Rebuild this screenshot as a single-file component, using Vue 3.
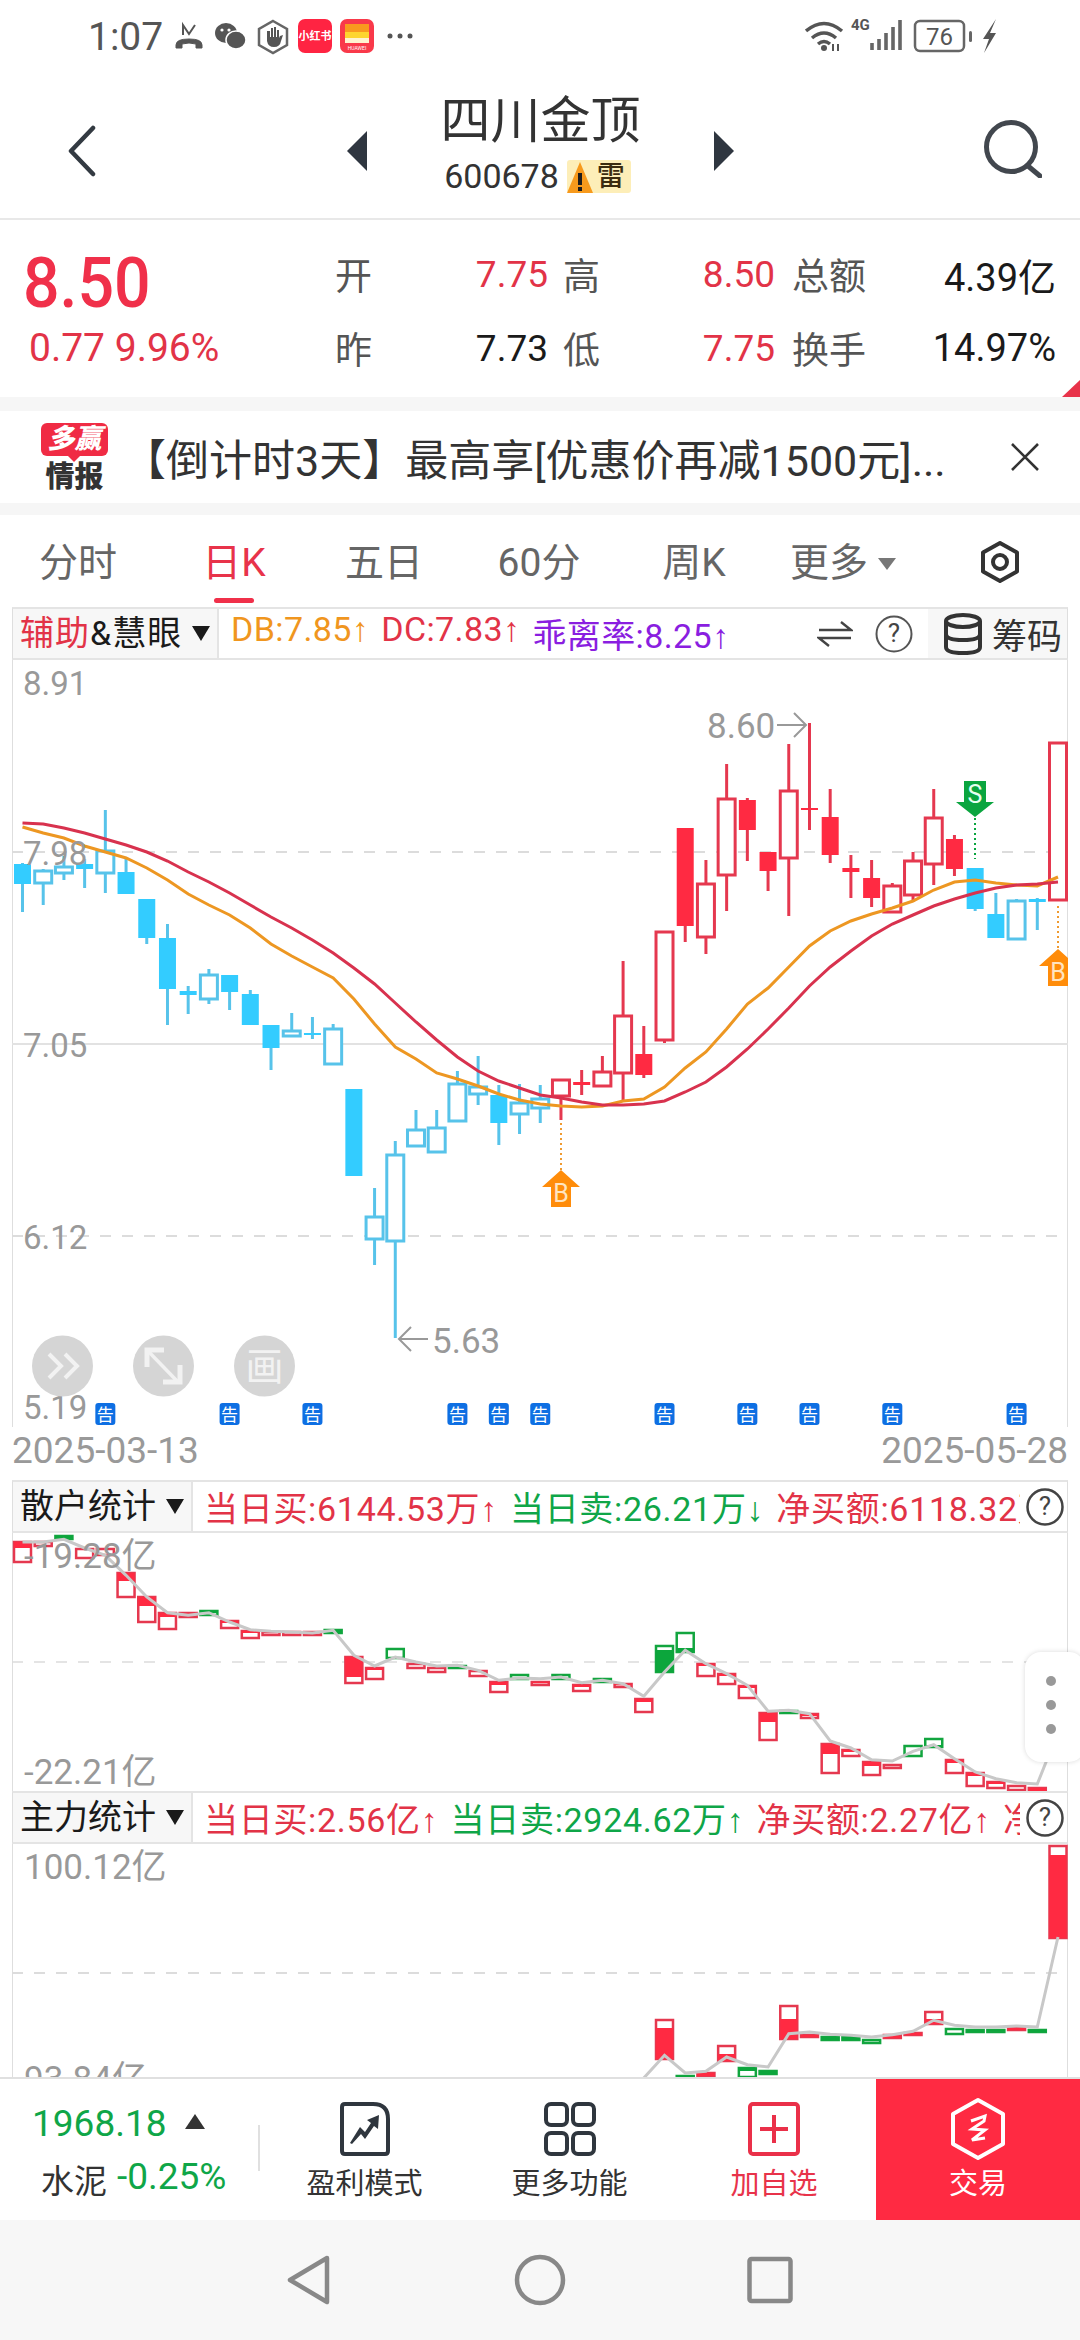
<script setup>
const cx = i => 22.5 + 20.71 * i
const raw = [
[862,911,863,883,'c'],[868,904,870,882,'C'],[855,879,866,872,'C'],[858,887,863,868,'c'],[809,892,850,872,'C'],[857,893,871,893,'c'],
[898,943,898,937,'c'],[923,1024,937,988,'c'],[985,1013,990,994,'c'],[968,1003,974,998,'C'],[974,1009,974,991,'c'],[989,1024,993,1024,'c'],
[1024,1069,1024,1047,'c'],[1012,1035,1030,1035,'C'],[1016,1038,1032,1034,'c'],[1023,1063,1028,1063,'C'],[1088,1175,1088,1175,'c'],[1187,1264,1216,1238,'C'],
[1140,1337,1154,1240,'C'],[1109,1145,1129,1145,'C'],[1109,1152,1127,1151,'C'],[1070,1120,1083,1120,'C'],[1055,1104,1086,1093,'C'],[1084,1144,1094,1122,'c'],
[1083,1133,1102,1113,'C'],[1084,1122,1098,1107,'C'],[1078,1119,1079,1095,'R'],[1069,1094,1081,1084,'r'],[1055,1085,1071,1085,'R'],[960,1101,1015,1072,'R'],
[1025,1077,1053,1074,'r'],[930,1042,931,1039,'R'],[827,941,827,925,'r'],[859,953,883,936,'R'],[763,910,798,874,'R'],[797,860,799,829,'r'],
[851,890,851,870,'r'],[743,915,790,857,'R'],[722,829,807,809,'r'],[788,862,816,854,'r'],[854,897,867,871,'r'],[859,906,877,897,'r'],
[882,912,885,911,'R'],[851,901,860,894,'R'],[788,884,817,863,'R'],[834,875,838,868,'r'],[867,910,867,908,'c'],[892,937,913,937,'c'],
[898,939,900,938,'C'],[897,929,898,901,'c'],[742,899,742,899,'R']
]
const colors = { c: '#33ccff', C: '#57c3ea', r: '#ff2a42', R: '#e5384f' }
const candles = raw.map((d, i) => ({
  id: i, x: cx(i), wt: d[0], wb: d[1], bt: d[2], bb: d[3],
  hollow: d[4] === 'C' || d[4] === 'R', color: colors[d[4]],
  wick: (d[4] === 'c' || d[4] === 'C') ? '#57c3ea' : '#e5384f'
}))
const dcY = [822,823,827,832,838,844,851,860,871,881,892,904,916,927,939,952,967,983,1002,1021,1039,1056,1070,1080,1087,1094,1097,1101,1104,1104,1103,1100,1091,1081,1066,1048,1028,1007,985,966,950,935,923,914,905,898,892,887,884,883,881]
const dbY = [826,832,837,845,851,857,867,879,893,904,914,927,943,955,966,977,998,1023,1046,1058,1072,1078,1085,1093,1099,1103,1105,1106,1105,1100,1098,1086,1067,1051,1028,1003,987,966,945,930,920,913,907,900,889,881,879,882,884,885,876]
const toPts = ys => ys.map((y, i) => `${cx(i).toFixed(1)},${y}`).join(' ')
const dcPts = toPts(dcY)
const dbPts = toPts(dbY)
const notices = [4,10,14,21,23,25,31,35,38,42,48].map(i => cx(i))

const barColor = { r: '#e5384f', g: '#12a53f' }
const barFill = { r: '#ff2a42', g: '#0ca63c' }
const mk = list => list.map(d => ({
  key: d[0], x: cx(d[0]) - 8.5, y: d[1], h: Math.max(d[2] - d[1], 2),
  stroke: barColor[d[3]], fill: barFill[d[3]], ft: d[4], fh: d[5] ? d[5] - d[4] : 0
}))
const retail = mk([
[0,1540,1560,'r',1540,1546],[1,1540,1544,'r'],[2,1534,1537,'g',1534,1536],[3,1547,1556,'r'],[4,1547,1553,'r'],
[5,1571,1595,'r',1571,1579],[6,1595,1620,'r',1595,1604],[7,1611,1627,'r',1611,1615],[8,1611,1615,'r',1611,1613],[9,1609,1613,'g',1609,1611],
[10,1619,1626,'r',1619,1621],[11,1629,1636,'r',1629,1631],[12,1630,1633,'r'],[13,1630,1633,'r'],[14,1630,1633,'r'],[15,1628,1631,'g',1628,1631],
[16,1655,1681,'r',1655,1675],[17,1666,1677,'r',1666,1668],[18,1647,1656,'g'],[19,1662,1666,'r'],[20,1666,1670,'r'],[21,1664,1666,'g',1664,1666],
[22,1669,1674,'r'],[23,1680,1690,'r',1680,1683],[24,1673,1677,'g'],[25,1680,1683,'r',1680,1681],[26,1673,1677,'g'],[27,1683,1689,'r',1683,1685],
[28,1677,1680,'g'],[29,1682,1685,'r',1682,1683],[30,1697,1710,'r',1697,1700],[31,1644,1670,'g',1648,1670],[32,1631,1650,'g',1646,1650],
[33,1662,1674,'r',1662,1664],[34,1672,1682,'r',1672,1674],[35,1684,1696,'r',1684,1686],[36,1711,1738,'r',1711,1720],[37,1709,1711,'g',1709,1711],
[38,1712,1716,'r',1712,1714],[39,1742,1771,'r',1742,1752],[40,1748,1754,'r',1748,1750],[41,1760,1773,'r',1760,1764],[42,1763,1766,'r'],
[43,1744,1754,'g'],[44,1737,1745,'g',1743,1745],[45,1758,1771,'r',1758,1761],[46,1771,1784,'r',1771,1774],[47,1780,1786,'r',1780,1782],
[48,1784,1788,'r'],[49,1786,1789,'r',1786,1789]
])
const retailZ6 = [240,240,232,258,280,340,405,452,460,452,480,503,508,510,513,505,580,612,585,600,612,610,625,655,648,650,645,662,655,665,703,630,565,605,635,670,748,745,755,837,858,893,897,868,848,890,930,950,962,966]
const retailLine = retailZ6.map((v, i) => `${cx(i).toFixed(1)},${(1460 + v / 3).toFixed(1)}`).join(' ') + ' 1058,1730'

const main = mk([
[31,2018,2057,'r',2026,2057],[32,2074,2076,'g',2074,2076],[33,2071,2074,'r',2071,2074],[34,2044,2059,'r',2052,2059],[35,2066,2075,'g',2066,2069],
[36,2069,2072,'g',2069,2072],[37,2004,2037,'r',2017,2037],[38,2033,2035,'r',2033,2035],[39,2035,2038,'g',2035,2038],[40,2035,2038,'g',2035,2038],
[41,2038,2041,'g',2038,2039],[42,2033,2036,'r',2034,2036],[43,2031,2033,'r',2031,2033],[44,2010,2022,'r',2017,2022],[45,2027,2032,'g',2027,2028],
[46,2028,2030,'g',2028,2030],[47,2028,2029,'g',2028,2029],[48,2026,2028,'r',2026,2028],[49,2028,2030,'g',2028,2030],[50,1844,1936,'r',1853,1936]
])
const mainZ = [[30,888],[31,820],[32,873],[33,868],[34,825],[35,848],[36,855],[37,755],[38,750],[39,757],[40,760],[41,765],[42,758],[43,748],[44,715],[45,730],[46,735],[47,735],[48,732],[49,735],[50,465]]
const mainLine = mainZ.map(p => `${cx(p[0]).toFixed(1)},${(1780 + p[1] / 3).toFixed(1)}`).join(' ')

const quotes = [
  ['开', '7.75', 'red', '高', '8.50', 'red', '总额', '4.39亿'],
  ['昨', '7.73', 'black', '低', '7.75', 'red', '换手', '14.97%']
]
const tabs = [
  { t: '分时' }, { t: '日K', on: true }, { t: '五日' }, { t: '60分' }, { t: '周K' }
]
</script>

<template>
  <div class="page">
    <div class="status">
      <span class="time">1:07</span>
      <svg class="st-left" width="240" height="40" viewBox="174 22 240 40">
        <path d="M176 53v-3q0-6 13-6t13 6v3h-6v-4q-7-2-14 0v4z" fill="#555" stroke="#555" stroke-width="1"/>
        <path d="M183 40v-10l6 9 6-9" fill="none" stroke="#555" stroke-width="2"/>
        <ellipse cx="226" cy="38" rx="11" ry="10" fill="#555"/>
        <ellipse cx="236" cy="45" rx="10" ry="9" fill="#555" stroke="#fff" stroke-width="1.5"/>
        <circle cx="222" cy="35" r="1.6" fill="#fff"/><circle cx="229" cy="35" r="1.6" fill="#fff"/>
        <polygon points="273,26 287,34 287,50 273,58 259,50 259,34" fill="none" stroke="#666" stroke-width="2.5"/>
        <path d="M267 36v10q1 6 7 6t7-6l2-6-3 1-1 2v-8h-2v7h-1v-10h-2v10h-1v-9h-2v9h-1v-6z" fill="#555"/>
        <rect x="298" y="24" width="34" height="34" rx="7" fill="#ff2442"/>
        <text x="315" y="45" text-anchor="middle" class="tiny">小红书</text>
        <rect x="340" y="24" width="34" height="34" rx="7" fill="#f9394a"/>
        <rect x="345" y="29" width="24" height="8" fill="#f99a1e"/><rect x="345" y="37" width="24" height="6" fill="#fed52e"/><rect x="345" y="43" width="24" height="5" fill="#fff3d0"/>
        <text x="357" y="55" text-anchor="middle" class="tinier">HUAWEI</text>
        <circle cx="390" cy="41" r="2.5" fill="#555"/><circle cx="400" cy="41" r="2.5" fill="#555"/><circle cx="410" cy="41" r="2.5" fill="#555"/>
      </svg>
      <svg class="st-right" width="195" height="40" viewBox="805 22 195 40">
        <path d="M806 36q18-15 36 0M812 43q12-10 24 0M818 49q6-5 12 0" fill="none" stroke="#555" stroke-width="3.5"/>
        <circle cx="824" cy="53" r="3" fill="#555"/>
        <path d="M833 49v7M838 49v7" stroke="#555" stroke-width="2"/>
        <text x="851" y="35" class="fourg">4G</text>
        <path d="M872 48v7M879 44v11M886 38v17M893 32v23M900 25v30" stroke="#666" stroke-width="3.6"/>
        <rect x="915" y="26" width="49" height="30" rx="5" fill="none" stroke="#666" stroke-width="2.5"/>
        <text x="939.5" y="50" text-anchor="middle" class="batt">76</text>
        <rect x="969" y="36" width="3" height="11" rx="1.5" fill="#666"/>
        <polygon points="996,24 983,44 989,44 984,58 996,38 990,38" fill="#555"/>
      </svg>
    </div>

    <div class="head">
      <svg class="back" width="29" height="52" viewBox="0 0 29 52"><path d="M26 3 4 26l22 23" fill="none" stroke="#333a42" stroke-width="4.5" stroke-linecap="round" stroke-linejoin="round"/></svg>
      <svg width="20" height="40" viewBox="0 0 20 40"><polygon points="20,0 0,20 20,40" fill="#2f3640"/></svg>
      <div class="title-col">
        <div class="title">四川金顶</div>
        <div class="sub">
          <span>600678</span>
          <span class="thunder">
            <svg width="26" height="31" viewBox="0 0 26 31"><polygon points="13,0 26,31 0,31" fill="#f79a1c"/><rect x="11" y="11" width="4" height="12" fill="#1c1c1c"/><rect x="11" y="25" width="4" height="4" fill="#1c1c1c"/></svg>
            <b>雷</b>
          </span>
        </div>
      </div>
      <svg width="20" height="40" viewBox="0 0 20 40"><polygon points="0,0 20,20 0,40" fill="#2f3640"/></svg>
      <svg class="search" width="58" height="58" viewBox="0 0 58 58"><circle cx="27" cy="27" r="24.5" fill="none" stroke="#42474e" stroke-width="5"/><path d="M44 46l12 10" stroke="#42474e" stroke-width="5" stroke-linecap="round"/></svg>
    </div>

    <div class="quote">
      <div class="price">
        <div class="big">8.50</div>
        <div class="chg">0.77 9.96%</div>
      </div>
      <div class="stats">
        <template v-for="q in quotes" :key="q[0]">
          <span class="lb">{{ q[0] }}</span>
          <span class="val" :class="q[2]">{{ q[1] }}</span>
          <span class="lb end">{{ q[3] }}</span>
          <span class="val" :class="q[5]">{{ q[4] }}</span>
          <span class="lb end">{{ q[6] }}</span>
          <span class="val black last">{{ q[7] }}</span>
        </template>
      </div>
      <i class="corner"></i>
    </div>

    <div class="band"></div>

    <div class="ad">
      <div class="logo">
        <div class="bubble">多赢</div>
        <div class="intel">情报</div>
      </div>
      <div class="ad-text">【倒计时3天】最高享[优惠价再减1500元]...</div>
      <svg class="close" width="30" height="30" viewBox="0 0 30 30"><path d="M2 2l26 26M28 2 2 28" stroke="#333" stroke-width="2.6"/></svg>
    </div>

    <div class="band b2"></div>

    <div class="tabs">
      <div v-for="t in tabs" :key="t.t" class="tab" :class="{ on: t.on }">{{ t.t }}</div>
      <div class="tab more">更多<i class="caret"></i></div>
      <div class="tab gear">
        <svg width="38" height="42" viewBox="0 0 38 42"><polygon points="19,2 36,11.5 36,30.5 19,40 2,30.5 2,11.5" fill="none" stroke="#333" stroke-width="4" stroke-linejoin="round"/><circle cx="19" cy="21" r="7" fill="none" stroke="#333" stroke-width="4"/></svg>
      </div>
    </div>

    <div class="charts">
      <div class="phead">
        <div class="plabel wide"><span class="red">辅助</span>&amp;慧眼<i class="tri"></i></div>
        <div class="inds first">
          <span class="orange">DB:7.85↑</span><span class="dred">DC:7.83↑</span><span class="purple">乖离率:8.25↑</span>
        </div>
        <svg width="36" height="36" viewBox="0 0 36 36" class="swap"><path d="M2 14H34L24 6M34 22H2L12 30" fill="none" stroke="#444" stroke-width="2.4"/></svg>
        <svg width="38" height="38" viewBox="0 0 38 38" class="help h1"><circle cx="19" cy="19" r="17.5" fill="none" stroke="#555" stroke-width="2"/><text x="19" y="27" text-anchor="middle" class="q">?</text></svg>
        <div class="chip">
          <svg width="40" height="42" viewBox="0 0 40 42"><ellipse cx="20" cy="8" rx="17" ry="6" fill="none" stroke="#333" stroke-width="4"/><path d="M3 8v26q0 6 17 6t17-6V8M3 21q0 6 17 6t17-6" fill="none" stroke="#333" stroke-width="4"/></svg>
          <span>筹码</span>
        </div>
      </div>

      <svg class="plot" width="1056" height="767" viewBox="12 659 1056 767">
        <line x1="12" x2="1068" y1="851" y2="851" class="dash"/>
        <line x1="12" x2="1068" y1="1043" y2="1043" class="solid"/>
        <line x1="12" x2="1068" y1="1235" y2="1235" class="dash"/>
        <g v-for="c in candles" :key="c.id">
          <line :x1="c.x" :x2="c.x" :y1="c.wt" :y2="c.wb" :stroke="c.wick" stroke-width="3"/>
          <rect v-if="c.hollow" :x="c.x - 8.5" :y="c.bt" width="17" :height="c.bb - c.bt" fill="#fff" :stroke="c.color" stroke-width="3"/>
          <rect v-else :x="c.x - 8.5" :y="c.bt" width="17" :height="c.bb - c.bt" :fill="c.color"/>
        </g>
        <polyline :points="dbPts" fill="none" stroke="#ed9722" stroke-width="3"/>
        <polyline :points="dcPts" fill="none" stroke="#d8324e" stroke-width="3"/>
        <text x="23" y="694" class="axis">8.91</text>
        <text x="23" y="864" class="axis">7.98</text>
        <text x="23" y="1056" class="axis">7.05</text>
        <text x="23" y="1248" class="axis">6.12</text>
        <text x="23" y="1418" class="axis">5.19</text>
        <text x="707" y="737" class="axis big-b">8.60</text>
        <path d="M777 724h29m-12-12 12 12-12 12" fill="none" stroke="#999" stroke-width="2"/>
        <path d="M428 1338h-29m12-12-12 12 12 12" fill="none" stroke="#999" stroke-width="2"/>
        <text x="432" y="1352" class="axis big-b">5.63</text>

        <line x1="561" x2="561" y1="1122" y2="1169" class="dot-o"/>
        <polygon points="561,1169 580,1186 571,1186 571,1206 551,1206 551,1186 542,1186" fill="#ff8c0a"/>
        <text x="561" y="1201" text-anchor="middle" class="mark">B</text>
        <line x1="1058" x2="1058" y1="905" y2="948" class="dot-o"/>
        <polygon points="1058,948 1077,965 1068,965 1068,985 1048,985 1048,965 1039,965" fill="#ff8c0a"/>
        <text x="1058" y="980" text-anchor="middle" class="mark">B</text>
        <line x1="975" x2="975" y1="817" y2="858" class="dot-g"/>
        <polygon points="964,780 986,780 986,801 994,801 975,816 956,801 964,801" fill="#0aa53f"/>
        <text x="975" y="802" text-anchor="middle" class="mark white">S</text>

        <g v-for="n in notices" :key="n">
          <rect :x="n - 10" y="1402" width="20" height="22" rx="3" fill="#0e6fe3"/>
          <text :x="n" y="1420" text-anchor="middle" class="notice">告</text>
        </g>

        <circle cx="62.5" cy="1365" r="30.5" fill="#d5d5d5"/>
        <circle cx="163.5" cy="1365" r="30.5" fill="#d5d5d5"/>
        <circle cx="264.5" cy="1365" r="30.5" fill="#d5d5d5"/>
        <path d="M49 1353l12 12-12 12M65 1353l12 12-12 12" fill="none" stroke="#f2f2f2" stroke-width="4"/>
        <path d="M148 1350l29 30" stroke="#f2f2f2" stroke-width="3.5"/>
        <path d="M147 1366v-17h17M180 1364v17h-17" fill="none" stroke="#f2f2f2" stroke-width="5"/>
        <text x="264.5" y="1379" text-anchor="middle" class="hua">画</text>
      </svg>

      <div class="dates"><span>2025-03-13</span><span>2025-05-28</span></div>

      <div class="phead">
        <div class="plabel">散户统计<i class="tri"></i></div>
        <div class="inds">
          <span class="dred">当日买:6144.53万↑</span><span class="green">当日卖:26.21万↓</span><span class="dred">净买额:6118.32万↑</span>
        </div>
        <svg width="38" height="38" viewBox="0 0 38 38" class="help"><circle cx="19" cy="19" r="17.5" fill="none" stroke="#444" stroke-width="2.5"/><text x="19" y="27" text-anchor="middle" class="q">?</text></svg>
      </div>

      <svg class="plot" width="1056" height="258" viewBox="12 1531 1056 258">
        <line x1="12" x2="1068" y1="1660" y2="1660" class="dash thin"/>
        <g v-for="b in retail" :key="b.key">
          <rect :x="b.x" :y="b.y" width="17" :height="b.h" fill="#fff" :stroke="b.stroke" stroke-width="2.5"/>
          <rect v-if="b.fh" :x="b.x" :y="b.ft" width="17" :height="b.fh" :fill="b.fill"/>
        </g>
        <polyline :points="retailLine" fill="none" stroke="#c8c8c8" stroke-width="3"/>
        <text x="24" y="1566" class="axis big-a">-19.28亿</text>
        <text x="24" y="1782" class="axis big-a">-22.21亿</text>
      </svg>

      <div class="phead">
        <div class="plabel">主力统计<i class="tri"></i></div>
        <div class="inds">
          <span class="dred">当日买:2.56亿↑</span><span class="green">当日卖:2924.62万↑</span><span class="dred">净买额:2.27亿↑</span><span class="dred">净流入:2.27亿</span>
        </div>
        <svg width="38" height="38" viewBox="0 0 38 38" class="help"><circle cx="19" cy="19" r="17.5" fill="none" stroke="#444" stroke-width="2.5"/><text x="19" y="27" text-anchor="middle" class="q">?</text></svg>
      </div>

      <svg class="plot" width="1056" height="235" viewBox="12 1842 1056 235">
        <line x1="12" x2="1068" y1="1971" y2="1971" class="dash"/>
        <g v-for="b in main" :key="b.key">
          <rect :x="b.x" :y="b.y" width="17" :height="b.h" fill="#fff" :stroke="b.stroke" stroke-width="2.5"/>
          <rect v-if="b.fh" :x="b.x" :y="b.ft" width="17" :height="b.fh" :fill="b.fill"/>
        </g>
        <polyline :points="mainLine" fill="none" stroke="#c8c8c8" stroke-width="3"/>
        <text x="24" y="1877" class="axis big-a">100.12亿</text>
        <text x="24" y="2089" class="axis big-a">93.84亿</text>
      </svg>
    </div>

    <div class="bottom">
      <div class="market">
        <div class="m1"><span class="idx">1968.18</span><i class="up"></i></div>
        <div class="m2"><span class="mname">水泥行业</span><span class="mchg">-0.25%</span></div>
      </div>
      <div class="act">
        <svg width="56" height="56" viewBox="0 0 56 56"><path d="M8 3H36Q51 3 51 18V50Q51 53 48 53H8Q5 53 5 50V6Q5 3 8 3Z" fill="none" stroke="#2f363e" stroke-width="4"/><path d="M13 42 23 26l5 5 6-9-4-3 12-5-1 14-4-3-9 13-4-5-9 10z" fill="#2f363e"/></svg>
        <span>盈利模式</span>
      </div>
      <div class="act">
        <svg width="56" height="56" viewBox="0 0 56 56"><g fill="none" stroke="#2f363e" stroke-width="4"><rect x="4" y="3" width="21" height="21" rx="5"/><rect x="31" y="3" width="21" height="21" rx="5"/><rect x="4" y="32" width="21" height="21" rx="5"/><rect x="31" y="32" width="21" height="21" rx="5"/></g></svg>
        <span>更多功能</span>
      </div>
      <div class="act a3 add">
        <svg width="56" height="56" viewBox="0 0 56 56"><rect x="4" y="3" width="48" height="50" rx="3" fill="none" stroke="#ea3049" stroke-width="4"/><path d="M28 14v28M14 28h28" stroke="#ea3049" stroke-width="4"/></svg>
        <span>加自选</span>
      </div>
      <div class="act trade">
        <svg width="56" height="64" viewBox="0 0 56 64"><polygon points="28,3 53,17 53,47 28,61 3,47 3,17" fill="none" stroke="#fff" stroke-width="4" stroke-linejoin="round"/><path d="M21 24l14-5-1 5-12 8 13 1-13 10 13-2" fill="none" stroke="#fff" stroke-width="3"/></svg>
        <span>交易</span>
      </div>
    </div>

    <div class="nav">
      <svg width="44" height="52" viewBox="0 0 44 52"><path d="M41 4 4 26l37 22z" fill="none" stroke="#888" stroke-width="4.5" stroke-linejoin="round"/></svg>
      <svg class="n2" width="52" height="52" viewBox="0 0 52 52"><circle cx="26" cy="26" r="23" fill="none" stroke="#888" stroke-width="4.5"/></svg>
      <svg class="n3" width="46" height="48" viewBox="0 0 46 48"><rect x="2.5" y="3" width="41" height="42" rx="2" fill="none" stroke="#888" stroke-width="4.5"/></svg>
    </div>

    <div class="floatbar"><i></i><i></i><i></i></div>
  </div>
</template>

<style>
html, body { margin: 0; padding: 0; background: #fff; }
</style>

<style scoped>
.page {
  position: relative;
  width: 1080px;
  height: 2340px;
  overflow: hidden;
  background: #fff;
  display: flex;
  flex-direction: column;
  font-family: Roboto, "Liberation Sans", "Noto Sans CJK SC", sans-serif;
  color: #333;
}
.status { height: 72px; display: flex; align-items: center; padding: 10px 0 0 88px; box-sizing: border-box; }
.time { font-size: 39px; color: #555; width: 86px; line-height: 40px; margin-top: -8px; }
.st-left { margin-top: -8px; }
.st-right { margin-left: 391px; margin-top: -8px; }
.tiny { font-size: 11px; fill: #fff; font-weight: 700; }
.tinier { font-size: 5px; fill: #fff; }
.fourg { font-size: 15px; font-weight: 700; fill: #555; }
.batt { font-size: 24px; fill: #555; }

.head {
  height: 148px; box-sizing: border-box; padding-top: 12px; border-bottom: 2px solid #e8e8e8;
  display: grid; grid-template-columns: 347px 20px 347px 20px 1fr; align-items: center;
}
.back { margin-left: 67px; }
.title-col { align-self: start; margin-top: 7px; text-align: center; }
.title { font-size: 50px; line-height: 60px; color: #333; }
.sub { height: 50px; display: flex; align-items: center; justify-content: center; font-size: 34px; color: #333; gap: 8px; margin-left: -6px; }
.thunder { display: inline-flex; align-items: flex-end; width: 64px; height: 33px; background: #fdeeb8; border-radius: 3px; }
.thunder svg { flex: none; }
.thunder b { font-size: 28px; line-height: 32px; font-weight: 500; color: #3c2c10; margin-left: 4px; }
.search { justify-self: end; margin-right: 38px; margin-top: -4px; }

.quote { position: relative; height: 177px; box-sizing: border-box; padding-top: 17px; display: flex; }
.price { width: 335px; flex: none; padding-left: 23px; box-sizing: border-box; color: #ee2c46; }
.big { font-size: 70px; line-height: 74px; font-weight: 500; color: #f0304a; margin-top: 9px; transform: scaleX(.92); transform-origin: left center; }
.chg { font-size: 39px; line-height: 74px; color: #e23347; margin-left: 6px; margin-top: -9px; white-space: nowrap; }
.stats { display: grid; grid-template-columns: 37px 176px 52px 175px 91px 190px; grid-auto-rows: 74px; align-items: center; }
.lb { font-size: 37px; color: #555; white-space: nowrap; }
.lb.end { text-align: right; }
.val { font-size: 37px; text-align: right; white-space: nowrap; }
.val.red, .red { color: #e23347; }
.val.black { color: #1a1a1a; }
.val.last { font-size: 38px; }
.corner { position: absolute; right: 0; bottom: 0; width: 0; height: 0; border-left: 18px solid transparent; border-bottom: 17px solid #e8334a; }

.band { height: 14px; background: #f6f6f6; flex: none; }
.band.b2 { height: 12px; }

.ad { height: 92px; display: flex; align-items: center; padding-left: 41px; box-sizing: border-box; flex: none; }
.logo { width: 67px; display: flex; flex-direction: column; align-items: center; flex: none; }
.bubble { position: relative; width: 67px; height: 33px; border-radius: 6px; background: #f02b44; color: #fff; font-size: 27px; font-weight: 900; line-height: 33px; text-align: center; font-style: italic; }
.bubble::after { content: ""; position: absolute; left: 27px; bottom: -6px; border-left: 6px solid transparent; border-right: 6px solid transparent; border-top: 6px solid #f02b44; }
.intel { font-size: 29px; font-weight: 900; line-height: 30px; color: #333; margin-top: 6px; }
.ad-text { flex: none; font-size: 43px; color: #333; margin-left: 15px; white-space: nowrap; width: 887px; }
.close { flex: none; margin-left: 0; }

.tabs { height: 92px; flex: none; display: grid; grid-template-columns: 156px 156px 144px 166px 144px 154px 160px; box-sizing: border-box; padding-top: 24px; }
.tab { position: relative; text-align: center; font-size: 39px; line-height: 48px; color: #666; white-space: nowrap; }
.tab.on { color: #e8334a; }
.tab.on::after { content: ""; position: absolute; left: 58px; top: 59px; width: 40px; height: 5px; border-radius: 3px; background: #f0304a; }
.caret { display: inline-block; margin-left: 10px; vertical-align: 6px; border-left: 9px solid transparent; border-right: 9px solid transparent; border-top: 12px solid #777; }
.gear { padding-top: 2px; text-align: center; }

.charts { width: 1056px; height: 1470px; margin-left: 12px; overflow: hidden; flex: none; box-shadow: inset 1px 0 #dedede, inset -1px 0 #dedede; }
.phead { height: 53px; box-sizing: border-box; display: flex; align-items: center; border-top: 2px solid #e4e4e4; border-bottom: 2px solid #e4e4e4; border-left: 1px solid #dedede; border-right: 1px solid #dedede; }
.plabel { position: relative; flex: none; width: 180px; height: 100%; box-sizing: border-box; padding-left: 7px; background: #f7f7f7; border-right: 2px solid #e4e4e4; font-size: 34px; line-height: 49px; color: #1a1a1a; white-space: nowrap; }
.plabel.wide { width: 206px; letter-spacing: 1px; }
.tri { position: absolute; right: 7px; top: 17px; border-left: 9px solid transparent; border-right: 9px solid transparent; border-top: 15px solid #1a1a1a; }
.inds { flex: 1; min-width: 0; overflow: hidden; white-space: nowrap; display: flex; gap: 12px; font-size: 34px; padding-left: 11px; margin-right: 6px; letter-spacing: .7px; }
.inds span { flex: none; }
.inds.first { gap: 12px; padding-left: 12px; letter-spacing: .4px; }
.orange { color: #f0961e; }
.dred { color: #e23347; }
.purple { color: #8a1ee0; }
.green { color: #0fa648; }
.swap { margin-right: 22px; }
.help { flex: none; margin-right: 3px; }
.help.h1 { margin-right: 15px; }
.q { font-size: 26px; fill: #444; }
.chip { flex: none; width: 139px; height: 100%; background: #f7f7f7; display: flex; align-items: center; box-sizing: border-box; padding-left: 15px; gap: 9px; font-size: 35px; color: #333; white-space: nowrap; }

.plot { display: block; }
.dash { stroke: #dcdcdc; stroke-width: 2; stroke-dasharray: 11 11; }
.dash.thin { stroke-width: 1.5; }
.solid { stroke: #e2e2e2; stroke-width: 2; }
.axis { font-size: 33px; fill: #999; }
.big-a { font-size: 35px; }
.big-b { font-size: 35px; }
.dot-o { stroke: #ef9a30; stroke-width: 2; stroke-dasharray: 2 3; }
.dot-g { stroke: #0aa53f; stroke-width: 2; stroke-dasharray: 2 3; }
.mark { font-size: 25px; fill: #ffe4c0; }
.mark.white { fill: #e6fff0; }
.notice { font-size: 17px; fill: #fff; }
.hua { font-size: 38px; fill: #f2f2f2; }

.dates { height: 53px; box-sizing: border-box; display: flex; justify-content: space-between; align-items: center; font-size: 37px; color: #999; padding-bottom: 6px; background: #fff; }

.bottom { height: 143px; flex: none; box-sizing: border-box; display: flex; border-top: 2px solid #e0e0e0; background: #fff; position: relative; }
.market { width: 262px; flex: none; box-sizing: border-box; padding-left: 32px; position: relative; }
.market::after { content: ""; position: absolute; right: 2px; top: 46px; height: 46px; width: 2px; background: #e0e0e0; }
.m1 { display: flex; align-items: center; height: 40px; margin-top: 24px; }
.idx { font-size: 37px; color: #0fa648; }
.up { margin-left: 18px; margin-top: -4px; border-left: 10px solid transparent; border-right: 10px solid transparent; border-bottom: 15px solid #333; }
.m2 { display: flex; align-items: center; margin-top: 16px; height: 40px; }
.mname { width: 66px; margin-left: 9px; overflow: hidden; white-space: nowrap; font-size: 33px; color: #333; }
.mchg { margin-left: 10px; font-size: 37px; color: #0fa648; margin-top: -6px; }
.act { width: 205px; flex: none; display: flex; flex-direction: column; align-items: center; padding-top: 22px; box-sizing: border-box; }
.act.a3 { width: 204px; }
.act span { font-size: 29px; line-height: 36px; margin-top: 9px; color: #333; white-space: nowrap; }
.act.add span { color: #e8334a; }
.act.trade { background: #ff2a42; width: 204px; padding-top: 18px; }
.act.trade span { color: #fff; margin-top: 5px; }

.nav { height: 120px; flex: none; background: #f7f7f7; display: flex; align-items: center; padding-left: 286px; box-sizing: border-box; }
.n2 { margin-left: 184px; }
.n3 { margin-left: 181px; }

.floatbar { position: absolute; left: 1025px; top: 1652px; width: 60px; height: 110px; background: #fff; border-radius: 16px; box-shadow: 0 0 5px rgba(0,0,0,.15); box-sizing: border-box; padding: 24px 0 0 21px; display: flex; flex-direction: column; gap: 14px; }
.floatbar i { width: 10px; height: 10px; border-radius: 50%; background: #999; }
</style>
